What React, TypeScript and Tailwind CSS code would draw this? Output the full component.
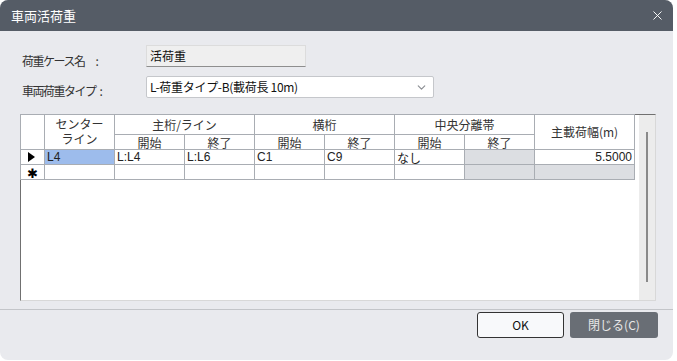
import { X, ChevronDown } from "lucide-react";

const jp = "font-['Noto_Sans_CJK_JP','Noto_Sans',sans-serif]";
const cell = "border border-[#a9adb3] p-0 font-normal";
const data = "border border-[#a9adb3] px-[2px] h-[15px] text-[12px] leading-[13px] font-['Liberation_Sans',sans-serif] text-[#222] whitespace-nowrap overflow-hidden";

export default function App() {
  return (
    <div className={`w-[677px] h-[361px] bg-white ${jp}`}>
      <div className="w-[673px] h-[360px] rounded-[8px] bg-[#e9eaee] flex flex-col overflow-hidden">
        <div className="h-[31px] shrink-0 bg-[#555c66] flex items-center justify-between pl-[11px] pr-[8px]">
          <span className="text-[13px] text-white leading-none">車両活荷重</span>
          <X size={15} strokeWidth={1.5} className="text-white" />
        </div>

        <div className="flex-1 flex flex-col pt-[14px]">
          <div className="flex pl-[22px] h-[22px]">
            <div className="w-[124px] pt-[8px] text-[12px] leading-[16px] text-[#333] flex">
              <span className="tracking-[-1.5px]">荷重ケース名</span>
              <span className="ml-[11px]">:</span>
            </div>
            <div className="w-[160px] h-[22px] bg-[#efefef] border border-[#dcdcdc] border-b-[#8e8e8e] pl-[3px] text-[12px] leading-[20px] text-[#111]">
              活荷重
            </div>
          </div>

          <div className="flex pl-[22px] h-[22px] mt-[9px]">
            <div className="w-[124px] pt-[7px] text-[12px] leading-[16px] text-[#333] flex">
              <span className="tracking-[-1.5px]">車両荷重タイプ</span>
              <span className="ml-[4px]">:</span>
            </div>
            <div className="w-[288px] h-[22px] bg-white border border-[#c5c7cb] rounded-[2px] flex items-center justify-between pl-[3px] pr-[5px]">
              <span className="text-[12px] leading-none text-[#111] tracking-[-0.3px]">L-荷重タイプ-B(載荷長 10m)</span>
              <ChevronDown size={13} strokeWidth={2.2} className="text-[#8c8f94]" />
            </div>
          </div>

          <div className="ml-[20px] mt-[16px] w-[636px] h-[187px] bg-white border border-t-[#707070] border-l-[#707070] border-r-[#d8d8d8] border-b-[#d8d8d8] flex">
            <div className="flex-1">
              <table className="border-collapse table-fixed w-[614px] -mt-px -ml-px text-[#333]">
                <colgroup>
                  <col className="w-[24px]" />
                  <col className="w-[70px]" />
                  <col className="w-[70px]" />
                  <col className="w-[70px]" />
                  <col className="w-[70px]" />
                  <col className="w-[70px]" />
                  <col className="w-[70px]" />
                  <col className="w-[70px]" />
                  <col className="w-[100px]" />
                </colgroup>
                <thead>
                  <tr className="h-[20px] text-[12px] leading-[14px]">
                    <th rowSpan={2} className={cell}></th>
                    <th rowSpan={2} className={`${cell} align-top`}>
                      <div className="leading-[15px] pt-[1px]">センター</div>
                      <div className="leading-[15px]">ライン</div>
                    </th>
                    <th colSpan={2} className={cell}>主桁/ライン</th>
                    <th colSpan={2} className={cell}>横桁</th>
                    <th colSpan={2} className={cell}>中央分離帯</th>
                    <th rowSpan={2} className={cell}>主載荷幅(m)</th>
                  </tr>
                  <tr className="h-[15px] text-[12px] leading-[13px]">
                    <th className={cell}>開始</th>
                    <th className={cell}>終了</th>
                    <th className={cell}>開始</th>
                    <th className={cell}>終了</th>
                    <th className={cell}>開始</th>
                    <th className={cell}>終了</th>
                  </tr>
                </thead>
                <tbody>
                  <tr className="h-[15px]">
                    <td className={`${cell} h-[15px] leading-none`}>
                      <svg width="8" height="10" viewBox="0 0 8 10" className="block ml-[6px]">
                        <polygon points="1,0 8,5 1,10" fill="#000" />
                      </svg>
                    </td>
                    <td className={`${data} bg-[#9dbcec]`}>L4</td>
                    <td className={data}>L:L4</td>
                    <td className={data}>L:L6</td>
                    <td className={data}>C1</td>
                    <td className={data}>C9</td>
                    <td className={`${data} ${jp}`}>なし</td>
                    <td className={`${data} bg-[#dcdee2]`}></td>
                    <td className={`${data} text-right`}>5.5000</td>
                  </tr>
                  <tr className="h-[15px]">
                    <td className={`${cell} h-[15px] text-center text-[13px] leading-[13px] text-black`}>✱</td>
                    <td className={data}></td>
                    <td className={data}></td>
                    <td className={data}></td>
                    <td className={data}></td>
                    <td className={data}></td>
                    <td className={data}></td>
                    <td className={`${data} bg-[#dcdee2]`}></td>
                    <td className={`${data} bg-[#dcdee2]`}></td>
                  </tr>
                </tbody>
              </table>
            </div>
            <div className="w-[16px] bg-[#ececec] flex justify-center pt-[17px]">
              <div className="w-[2px] h-[150px] bg-[#8a8a8a]" />
            </div>
          </div>

          <div className="mt-[8px] h-px bg-[#c3c5c9]" />

          <div className="flex justify-end gap-[6px] pr-[15px] mt-[2px]">
            <button className="w-[87px] h-[26px] bg-[#f8f9fb] border border-[#333] rounded-[3px] text-[12px] text-[#111]">
              OK
            </button>
            <button className="w-[88px] h-[26px] bg-[#696e75] rounded-[3px] text-[12px] text-[#e8e8e8]">
              閉じる(C)
            </button>
          </div>
        </div>
      </div>
    </div>
  );
}
